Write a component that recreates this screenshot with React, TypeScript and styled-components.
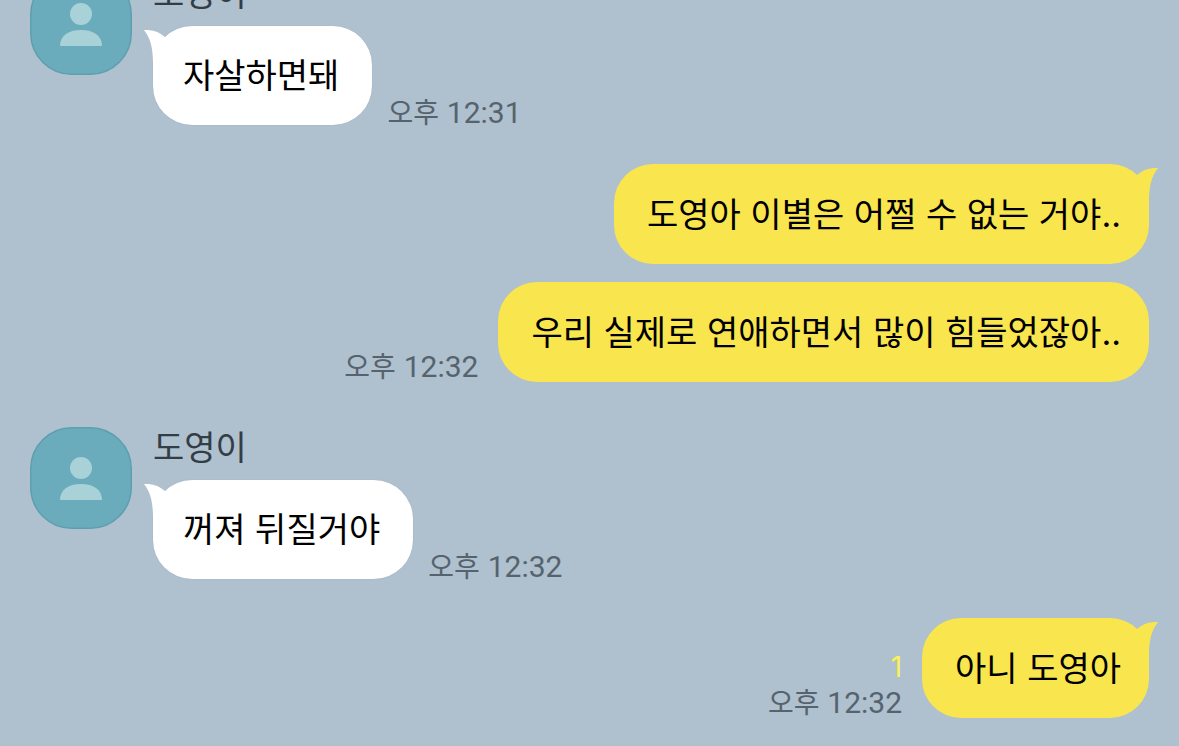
import React from "react";
import styled, { createGlobalStyle, css } from "styled-components";

type Side = "received" | "sent";

interface Message {
  text: string;
  time?: string;
  unread?: number;
}

interface Group {
  side: Side;
  author?: string;
  messages: Message[];
}

const conversation: Group[] = [
  {
    side: "received",
    author: "도영이",
    messages: [{ text: "자살하면돼", time: "12:31" }],
  },
  {
    side: "sent",
    messages: [
      { text: "도영아 이별은 어쩔 수 없는 거야.." },
      { text: "우리 실제로 연애하면서 많이 힘들었잖아..", time: "12:32" },
    ],
  },
  {
    side: "received",
    author: "도영이",
    messages: [{ text: "꺼져 뒤질거야", time: "12:32" }],
  },
  {
    side: "sent",
    messages: [{ text: "아니 도영아", time: "12:32", unread: 1 }],
  },
];

const GlobalStyle = createGlobalStyle`
  * {
    box-sizing: border-box;
  }

  body {
    margin: 0;
    background: #afc0cf;
    font-family: Inter, "Noto Sans CJK KR", sans-serif;
  }
`;

const Chat = styled.main`
  display: flex;
  flex-direction: column;
  justify-content: flex-end;
  height: 100vh;
  padding: 0 30px 28px;
  overflow: hidden;
  background: #afc0cf;
`;

const MessageGroup = styled.section<{ $side: Side }>`
  display: flex;
  flex-shrink: 0;
  align-items: flex-start;
  gap: 21px;
  justify-content: ${({ $side }) => ($side === "sent" ? "flex-end" : "flex-start")};
  margin-top: ${({ $side }) => ($side === "sent" ? 39 : 45)}px;
`;

const Avatar = styled.svg`
  flex: none;
  width: 102px;
  height: 102px;
`;

const Thread = styled.div<{ $side: Side }>`
  display: flex;
  flex-direction: column;
  align-items: ${({ $side }) => ($side === "sent" ? "flex-end" : "flex-start")};
`;

const Author = styled.h2`
  margin: 0;
  height: 53px;
  color: #333d45;
  font-size: 34px;
  font-weight: 400;
  line-height: 42px;
`;

const MessageList = styled.ol`
  display: flex;
  flex-direction: column;
  align-items: inherit;
  gap: 18px;
  margin: 0;
  padding: 0;
  list-style: none;
`;

const MessageRow = styled.li<{ $side: Side }>`
  display: flex;
  align-items: flex-end;
  flex-direction: ${({ $side }) => ($side === "sent" ? "row-reverse" : "row")};
  gap: ${({ $side }) => ($side === "sent" ? 20 : 15)}px;
`;

const Bubble = styled.p<{ $side: Side }>`
  position: relative;
  margin: 0;
  border-radius: 39px;
  color: #000;
  font-size: 34px;
  line-height: 40px;

  ${({ $side }) =>
    $side === "sent"
      ? css`
          padding: 31px 28px 29px 33px;
          background: #f9e54e;
        `
      : css`
          padding: 30px 33px 29px 30px;
          background: #fff;
          box-shadow: 0 0 1px #8fa5b8;
        `}
`;

const Tail = styled.svg<{ $side: Side }>`
  position: absolute;
  top: 4px;
  width: 22px;
  height: 36px;

  ${({ $side }) =>
    $side === "sent"
      ? css`
          right: -9px;
          fill: #f9e54e;
          transform: scaleX(-1);
        `
      : css`
          left: -9px;
          fill: #fff;
        `}
`;

const Meta = styled.div<{ $side: Side }>`
  display: flex;
  flex-direction: column;
  align-items: flex-end;
  gap: 12px;
  padding-bottom: ${({ $side }) => ($side === "sent" ? 3 : 0)}px;
  color: #56636d;
  font-size: 28px;
  line-height: 24px;
  white-space: nowrap;
`;

const Unread = styled.span`
  color: #fbf055;
`;

const Clock = styled.span`
  font-family: Roboto, sans-serif;
  font-size: 30px;
`;

function ProfilePicture({ name }: { name: string }) {
  return (
    <Avatar viewBox="0 0 102 102" role="img" aria-label={name}>
      <rect
        x="0.75"
        y="0.75"
        width="100.5"
        height="100.5"
        rx="41"
        fill="#6aacbb"
        stroke="#5d9fae"
        strokeWidth="1.5"
      />
      <circle cx="51" cy="41" r="11" fill="#a8d1d8" />
      <path d="M30 73C30 63 38 57 51 57C64 57 72 63 72 73Z" fill="#a8d1d8" />
    </Avatar>
  );
}

function BubbleTail({ side }: { side: Side }) {
  return (
    <Tail $side={side} viewBox="0 0 22 36" aria-hidden="true">
      <path d="M0 0C9 -0.5 15 2 21 7L22 20L12 36L9 34C9 19 7 9 0 0Z" />
    </Tail>
  );
}

export default function App() {
  return (
    <>
      <GlobalStyle />
      <Chat>
        {conversation.map((group, index) => (
          <MessageGroup key={index} $side={group.side}>
            {group.author && <ProfilePicture name={group.author} />}
            <Thread $side={group.side}>
              {group.author && <Author>{group.author}</Author>}
              <MessageList>
                {group.messages.map((message, position) => (
                  <MessageRow key={message.text} $side={group.side}>
                    <Bubble $side={group.side}>
                      {position === 0 && <BubbleTail side={group.side} />}
                      {message.text}
                    </Bubble>
                    {message.time && (
                      <Meta $side={group.side}>
                        {message.unread && <Unread>{message.unread}</Unread>}
                        <time dateTime={message.time}>
                          오후 <Clock>{message.time}</Clock>
                        </time>
                      </Meta>
                    )}
                  </MessageRow>
                ))}
              </MessageList>
            </Thread>
          </MessageGroup>
        ))}
      </Chat>
    </>
  );
}
